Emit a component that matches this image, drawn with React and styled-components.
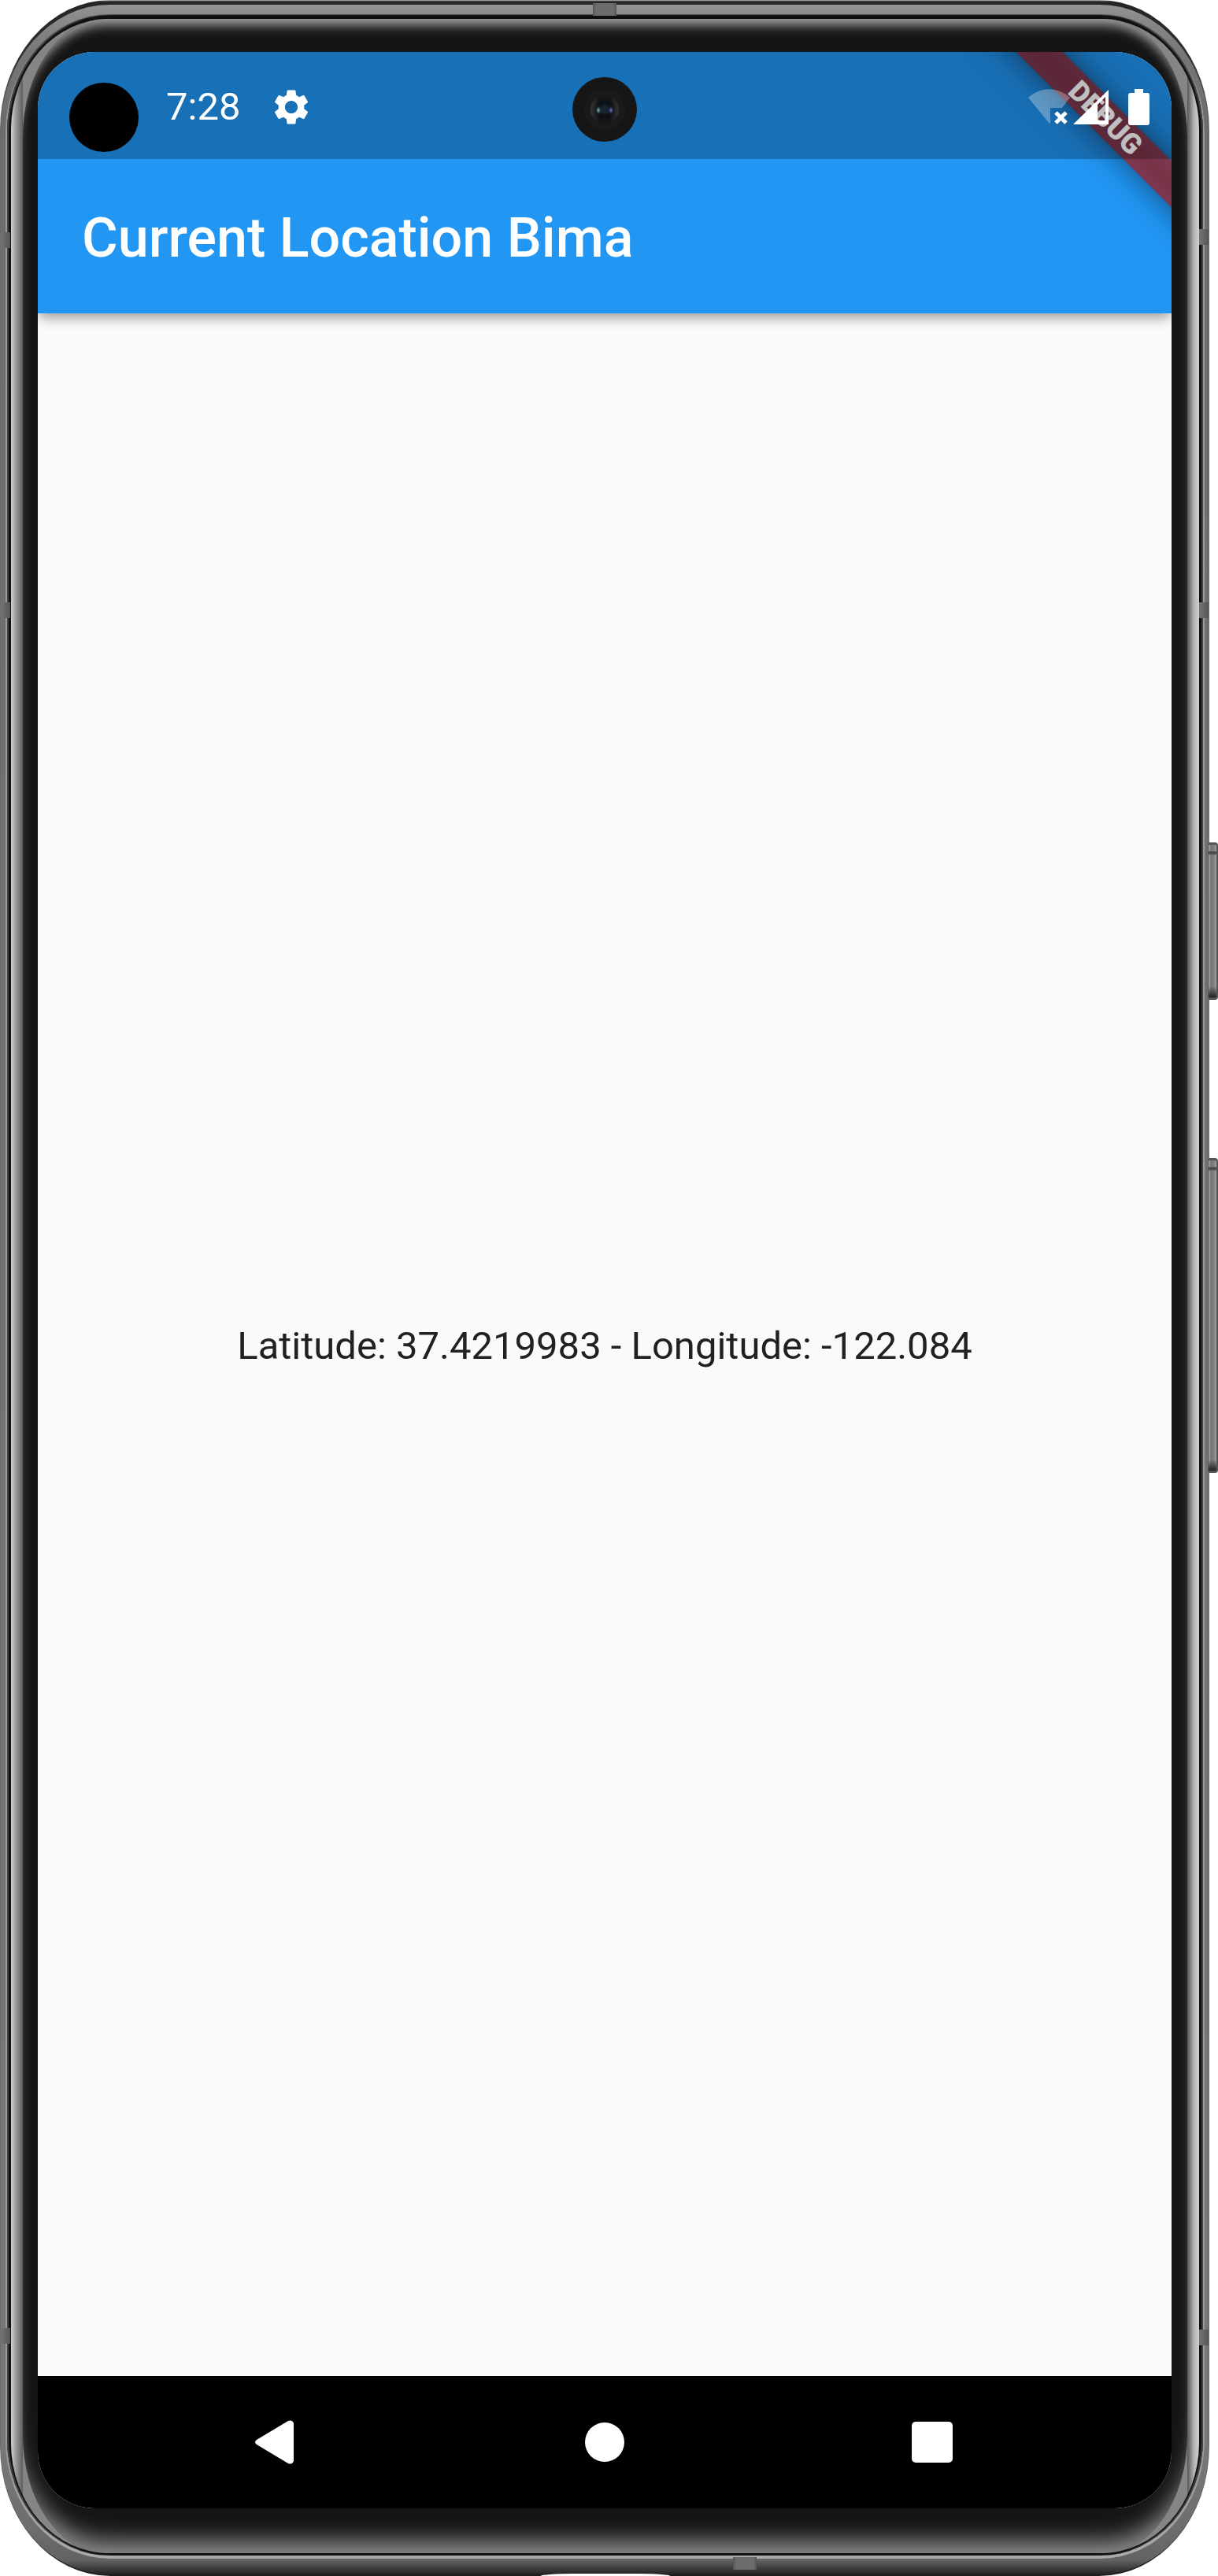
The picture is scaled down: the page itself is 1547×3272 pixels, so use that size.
import React from "react";
import styled, { createGlobalStyle } from "styled-components";
import { MdSettings } from "react-icons/md";

const GlobalStyle = createGlobalStyle`
  *, *::before, *::after { box-sizing: border-box; }
  body { margin: 0; background: #fff; font-family: Roboto, "Noto Sans", sans-serif; }
`;

/* ---------- phone hardware ---------- */

const Device = styled.div`
  position: relative;
  display: flex;
  min-height: 100vh;
  padding-right: 11px;
`;

const Ring = styled.div`
  flex: 1;
  display: flex;
  min-width: 0;
`;

const Edge = styled(Ring)`
  padding: 6px 1px 2px 1px;
  border-radius: 140px / 165px;
  background: linear-gradient(180deg, #b8c0ba 0, #262626 2px, #2c2c2c 60px, #6a6a6a 160px, #6a6a6a calc(100% - 160px), #2a2a2a calc(100% - 30px), #1c1c1c 100%);
`;

const Rail = styled(Ring)`
  padding: 12px 5px 20px 6px;
  border-radius: 138px / 160px;
  background: linear-gradient(180deg, #959595 0, #8c8c8c 12px, #777 60px, #6c6c6c 150px, #777 calc(100% - 150px), #6e6e6e calc(100% - 60px), #626262 calc(100% - 18px), #222 100%);
`;

const Highlight = styled(Ring)`
  padding: 1px 2px 4px 2px;
  border-radius: 132px / 150px;
  background: linear-gradient(180deg, #555 0, #999 120px, #999 calc(100% - 100px), #aaa 100%);
`;

const Gasket = styled(Ring)`
  padding: 5px 5px 3px 5px;
  border-radius: 130px / 148px;
  background: #101010;
  box-shadow: inset 2px 0 1px #444, inset -2px 0 1px #444;
`;

const Bevel = styled(Ring)`
  padding: 0 15px;
  border-radius: 124px / 140px;
  background:
    linear-gradient(90deg, #d2d2d2 0, #a4a4a4 5px, #5c5c5c 15px, transparent 15px) left / 50% 100% no-repeat,
    linear-gradient(270deg, #d2d2d2 0, #b4b4b4 7px, #5c5c5c 15px, transparent 15px) right / 50% 100% no-repeat,
    #858585;
`;

const Glass = styled(Ring)`
  padding: 42px 20px 57px 19px;
  border-radius: 105px / 150px;
  background: #151515;
  box-shadow: inset 0 17px 14px -9px #a0a0a0, inset 0 -32px 28px -16px #8c8c8c;
`;

const SideKey = styled.span`
  position: absolute;
  right: 0;
  top: ${(p) => p.$top};
  width: 13px;
  height: ${(p) => p.$height};
  border-radius: 3px 4px 4px 3px;
  border: solid #555;
  border-width: 3px 2px 3px 1px;
  background:
    linear-gradient(180deg, transparent 8px, #444 9px, #555 12px, transparent 13px, transparent calc(100% - 14px), #222 100%),
    linear-gradient(90deg, #aaa 0, #747474 3px, #808080 7px, #a2a2a2 10px);
`;

const SideBand = styled.span`
  position: absolute;
  ${(p) => p.$side}: ${(p) => (p.$side === "right" ? "12px" : "1px")};
  top: ${(p) => p.$top};
  width: 12px;
  height: 20px;
  background: linear-gradient(90deg, #747474, #565656);
`;

const CapBand = styled.span`
  position: absolute;
  left: ${(p) => p.$left};
  ${(p) => p.$edge}: ${(p) => (p.$edge === "top" ? "4px" : "8px")};
  width: 30px;
  height: 16px;
  background: linear-gradient(90deg, #555, #6c6c6c 4px, #6c6c6c 26px, #555);
`;

const PortCutout = styled.span`
  position: absolute;
  left: 687px;
  bottom: 0;
  width: 164px;
  height: 3px;
  border-radius: 40px 40px 0 0 / 3px 3px 0 0;
  background: #fff;
`;

/* ---------- screen ---------- */

const Screen = styled.div`
  position: relative;
  flex: 1;
  min-width: 0;
  display: flex;
  flex-direction: column;
  overflow: hidden;
  border-radius: 72px;
  background: #fafafa;
`;

const Header = styled.header`
  background: #2196f3;
  box-shadow: 0 8px 14px -2px rgba(0, 0, 0, 0.3), 0 2px 20px -2px rgba(0, 0, 0, 0.12);
`;

const StatusBar = styled.div`
  position: relative;
  z-index: 2;
  display: flex;
  align-items: center;
  justify-content: space-between;
  height: 136px;
  padding: 4px 28px 0 163px;
  background: rgba(0, 0, 0, 0.25);
  color: #fff;
`;

const StatusGroup = styled.div`
  display: flex;
  align-items: center;
  gap: ${(p) => p.$gap};
`;

const Clock = styled.time`
  font-size: 49px;
  line-height: 56px;
`;

const PunchHole = styled.span`
  position: absolute;
  left: 40px;
  top: 39px;
  width: 88px;
  height: 88px;
  border-radius: 50%;
  background: #000;
`;

const Camera = styled.svg`
  position: absolute;
  left: calc(50% - 41px);
  top: 32px;
`;

const AppBar = styled.div`
  display: flex;
  align-items: center;
  height: 196px;
  padding: 4px 56px 0;
`;

const Title = styled.h1`
  margin: 0;
  color: #fff;
  font-size: 70px;
  font-weight: 500;
  line-height: 82px;
`;

const DebugBanner = styled.div`
  position: absolute;
  z-index: 1;
  top: 63px;
  right: -116px;
  width: 400px;
  height: 42px;
  transform: rotate(45deg);
  background:
    linear-gradient(rgba(183, 28, 28, 0.627), rgba(183, 28, 28, 0.627)),
    linear-gradient(180deg, rgba(0, 0, 0, 0.28), rgba(0, 0, 0, 0.42) 50%, rgba(0, 0, 0, 0.28));
  box-shadow: 0 0 42px rgba(0, 0, 0, 0.5);
  color: #fff;
  font-size: 36px;
  font-weight: 900;
  line-height: 42px;
  text-align: center;
`;

const Content = styled.main`
  flex: 1;
  display: flex;
  align-items: center;
  justify-content: center;
  padding-top: 4px;
`;

const Coordinates = styled.p`
  margin: 0;
  color: #212121;
  font-size: 49px;
  line-height: 58px;
`;

const NavBar = styled.nav`
  display: flex;
  justify-content: center;
  gap: 248px;
  height: 168px;
  background: #000;
`;

const NavButton = styled.button`
  display: flex;
  align-items: center;
  justify-content: center;
  width: 168px;
  padding: 0;
  border: 0;
  background: transparent;
  color: #fff;
`;

/* ---------- icons ---------- */

const WifiOffIcon = () => (
  <svg width="57" height="46" viewBox="0 0 57 46" aria-hidden="true">
    <path d="M27 44 0 11C16-3.500 37-3.500 53 11L43 24H28V43Z" fill="#fff" fillOpacity="0.3" />
    <path d="M35 30l13 13M48 30 35 43" stroke="#fff" strokeWidth="5" />
  </svg>
);

const SignalIcon = () => (
  <svg width="45" height="46" viewBox="0 0 45 46" aria-hidden="true">
    <path d="M0 45 45 1V45ZM31 20V40H41V10Z" fill="#fff" fillRule="evenodd" />
  </svg>
);

const BatteryIcon = () => (
  <svg width="27" height="46" viewBox="0 0 27 46" aria-hidden="true">
    <path d="M8 0H19V5H24a3 3 0 0 1 3 3V43a3 3 0 0 1-3 3H3a3 3 0 0 1-3-3V8a3 3 0 0 1 3-3H8Z" fill="#fff" />
  </svg>
);

const CameraLens = () => (
  <Camera width="82" height="82" viewBox="0 0 82 82" aria-hidden="true">
    <defs>
      <radialGradient id="teal">
        <stop offset="0" stopColor="#8fd0cf" />
        <stop offset="1" stopColor="#1b3436" stopOpacity="0" />
      </radialGradient>
      <radialGradient id="violet">
        <stop offset="0" stopColor="#7484de" />
        <stop offset="1" stopColor="#20244c" stopOpacity="0" />
      </radialGradient>
      <linearGradient id="barrel">
        <stop offset="0" stopColor="#353535" />
        <stop offset="0.3" stopColor="#151515" />
        <stop offset="0.7" stopColor="#151515" />
        <stop offset="1" stopColor="#333" />
      </linearGradient>
    </defs>
    <circle cx="41" cy="41" r="41" fill="#161616" />
    <circle cx="41" cy="41" r="26" fill="#1a1a1a" />
    <circle cx="41" cy="41" r="18" fill="url(#barrel)" />
    <circle cx="41" cy="41" r="12" fill="#0e1216" />
    <circle cx="41" cy="41" r="6" fill="#18252c" />
    <ellipse cx="33" cy="42" rx="4" ry="6" fill="url(#teal)" />
    <ellipse cx="49" cy="42" rx="4" ry="6" fill="url(#violet)" />
  </Camera>
);

const BackIcon = () => (
  <svg width="56" height="56" viewBox="0 0 56 56" aria-hidden="true">
    <path d="M2 25 42 1Q47-1 49 4V52Q47 57 42 55L2 31Q-2 28 2 25Z" fill="#fff" />
  </svg>
);

const HomeIcon = () => (
  <svg width="50" height="50" viewBox="0 0 50 50" aria-hidden="true">
    <circle cx="25" cy="25" r="25" fill="#fff" />
  </svg>
);

const RecentsIcon = () => (
  <svg width="52" height="52" viewBox="0 0 52 52" aria-hidden="true">
    <rect width="52" height="52" rx="5" fill="#fff" />
  </svg>
);

/* ---------- app ---------- */

const PhoneFrame = ({ children }) => (
  <Device>
    <SideKey $top="1070px" $height="200px" />
    <SideKey $top="1471px" $height="400px" />
    <Edge>
      <Rail>
        <Highlight>
          <Gasket>
            <Bevel>
              <Glass>{children}</Glass>
            </Bevel>
          </Gasket>
        </Highlight>
      </Rail>
    </Edge>
    <SideBand $side="left" $top="295px" />
    <SideBand $side="left" $top="765px" />
    <SideBand $side="left" $top="2957px" />
    <SideBand $side="right" $top="291px" />
    <SideBand $side="right" $top="765px" />
    <SideBand $side="right" $top="2959px" />
    <CapBand $left="753px" $edge="top" />
    <CapBand $left="931px" $edge="bottom" />
    <PortCutout />
  </Device>
);

export default function App() {
  return (
    <>
      <GlobalStyle />
      <PhoneFrame>
        <Screen>
          <Header>
            <StatusBar>
              <PunchHole />
              <StatusGroup $gap="38px">
                <Clock>7:28</Clock>
                <MdSettings size={54} aria-hidden="true" />
              </StatusGroup>
              <CameraLens />
              <StatusGroup $gap="0px">
                <WifiOffIcon />
                <StatusGroup $gap="25px">
                  <SignalIcon />
                  <BatteryIcon />
                </StatusGroup>
              </StatusGroup>
            </StatusBar>
            <AppBar>
              <Title>Current Location Bima</Title>
            </AppBar>
          </Header>
          <DebugBanner>DEBUG</DebugBanner>
          <Content>
            <Coordinates>Latitude: 37.4219983 - Longitude: -122.084</Coordinates>
          </Content>
          <NavBar>
            <NavButton aria-label="Back"><BackIcon /></NavButton>
            <NavButton aria-label="Home"><HomeIcon /></NavButton>
            <NavButton aria-label="Recent apps"><RecentsIcon /></NavButton>
          </NavBar>
        </Screen>
      </PhoneFrame>
    </>
  );
}
